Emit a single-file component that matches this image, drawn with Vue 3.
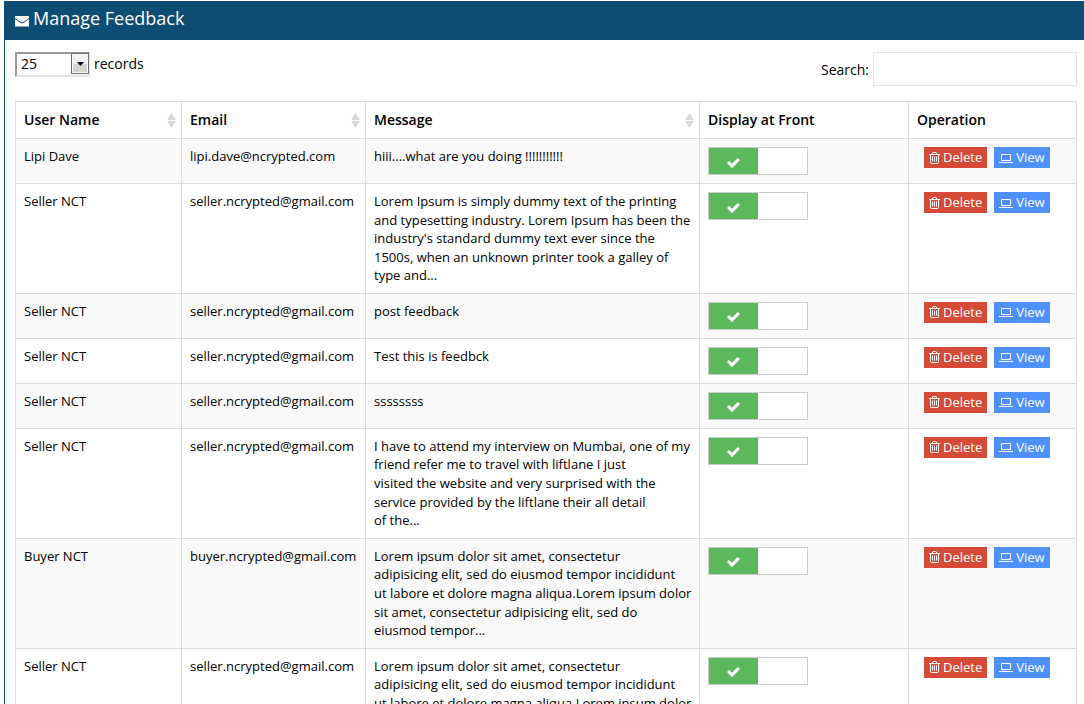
<script setup>
import { ref } from 'vue'

const pageSize = ref('25')
const search = ref('')

const columns = [
  { label: 'User Name', cls: 'col-name', sortable: true },
  { label: 'Email', cls: 'col-email', sortable: true },
  { label: 'Message', cls: 'col-message', sortable: true },
  { label: 'Display at Front', cls: 'col-display', sortable: false },
  { label: 'Operation', cls: 'col-operation', sortable: false },
]

const dolor =
  'Lorem ipsum dolor sit amet, consectetur\nadipisicing elit, sed do eiusmod tempor incididunt\nut labore et dolore magna aliqua.Lorem ipsum dolor\nsit amet, consectetur adipisicing elit, sed do\neiusmod tempor...'

const rows = ref([
  { name: 'Lipi Dave', email: 'lipi.dave@ncrypted.com', message: 'hiii....what are you doing !!!!!!!!!!!', shown: true },
  {
    name: 'Seller NCT',
    email: 'seller.ncrypted@gmail.com',
    message:
      "Lorem Ipsum is simply dummy text of the printing\nand typesetting industry. Lorem Ipsum has been the\nindustry's standard dummy text ever since the\n1500s, when an unknown printer took a galley of\ntype and...",
    shown: true,
  },
  { name: 'Seller NCT', email: 'seller.ncrypted@gmail.com', message: 'post feedback', shown: true },
  { name: 'Seller NCT', email: 'seller.ncrypted@gmail.com', message: 'Test this is feedbck', shown: true },
  { name: 'Seller NCT', email: 'seller.ncrypted@gmail.com', message: 'ssssssss', shown: true },
  {
    name: 'Seller NCT',
    email: 'seller.ncrypted@gmail.com',
    message:
      'I have to attend my interview on Mumbai, one of my\nfriend refer me to travel with liftlane I just\nvisited the website and very surprised with the\nservice provided by the liftlane their all detail\nof the...',
    shown: true,
  },
  { name: 'Buyer NCT', email: 'buyer.ncrypted@gmail.com', message: dolor, shown: true },
  { name: 'Seller NCT', email: 'seller.ncrypted@gmail.com', message: dolor, shown: true },
])
</script>

<template>
  <main class="panel">
    <header class="panel-head">
      <svg class="mail" width="14" height="11" viewBox="0 0 14 11" aria-hidden="true">
        <path class="mail-body" d="M0 0H14V10.500H0Z" />
        <path class="mail-fold" d="M0 2.500L5 6.200Q7 7.600 9 6.200L14 2.500" />
      </svg>
      <h1>Manage Feedback</h1>
    </header>

    <div class="panel-body">
      <div class="tools">
        <label class="length">
          <span class="select-box">
            <select v-model="pageSize">
              <option>10</option>
              <option>25</option>
              <option>50</option>
            </select>
            <span class="drop">
              <svg width="7" height="4" viewBox="0 0 7 4" aria-hidden="true"><path d="M0 0H7L3.500 4Z" /></svg>
            </span>
          </span>
          records
        </label>
        <label class="filter">
          Search:
          <input v-model="search" type="search" />
        </label>
      </div>

      <table>
        <thead>
          <tr>
            <th v-for="c in columns" :key="c.label" :class="c.cls" scope="col">
              <div class="head-cell">
                {{ c.label }}
                <svg v-if="c.sortable" class="sort" width="9" height="15" viewBox="0 0 9 15" aria-hidden="true">
                  <path d="M4.500 0L9 7H0ZM0 8H9L4.500 15Z" />
                </svg>
              </div>
            </th>
          </tr>
        </thead>
        <tbody>
          <tr v-for="(r, i) in rows" :key="i">
            <td>{{ r.name }}</td>
            <td>{{ r.email }}</td>
            <td class="message">{{ r.message }}</td>
            <td>
              <label class="toggle">
                <input v-model="r.shown" type="checkbox" :aria-label="'Display feedback from ' + r.name + ' at front'" />
                <span class="half">
                  <svg width="13" height="10" viewBox="0 0 13 10" aria-hidden="true">
                    <path d="M0 5L2 3L5 5.800L10.800 0L13 2L5.200 10H4.800Z" />
                  </svg>
                </span>
              </label>
            </td>
            <td>
              <div class="actions">
                <button type="button" class="delete">
                  <svg class="trash" width="11" height="12" viewBox="0 0 11 12" aria-hidden="true">
                    <path d="M0 2.500H11M3 2.500L4 .500H7L8 2.500M1.500 2.500V10.500Q1.500 11.500 2.500 11.500H8.500Q9.500 11.500 9.500 10.500V2.500M3.500 4.500V9.500M5.500 4.500V9.500M7.500 4.500V9.500" />
                  </svg>
                  Delete
                </button>
                <button type="button" class="view">
                  <svg width="14" height="10" viewBox="0 0 14 10" aria-hidden="true">
                    <path d="M2.500 1.500H11.500V7.500H2.500ZM0 9.500H14" />
                  </svg>
                  View
                </button>
              </div>
            </td>
          </tr>
        </tbody>
      </table>
    </div>
  </main>
</template>

<style>
html,
body {
  background: #fff;
}
body {
  margin: 0;
}
</style>

<style scoped>
* {
  box-sizing: border-box;
}
.panel {
  margin: 1px 0 0 4px;
  border-left: 1px solid #0e4d73;
  color: #000;
  font-family: "Open Sans", sans-serif;
  font-size: 13px;
  line-height: 1.43;
}
.panel-head {
  display: flex;
  align-items: center;
  gap: 4px;
  height: 39px;
  padding: 0 10px 6px 10px;
  background: #0e4d73;
  color: #fff;
}
.mail {
  margin-top: 8px;
}
.mail-body {
  fill: #fff;
}
.mail-fold {
  fill: none;
  stroke: #0e4d73;
}
h1 {
  margin: 0;
  font-size: 18px;
  font-weight: 400;
  line-height: 24px;
}
.panel-body {
  padding: 11px 7px 0 10px;
}
.tools {
  display: flex;
  justify-content: space-between;
  align-items: flex-start;
  margin-bottom: 15px;
  font-size: 14px;
}
.length,
.filter {
  display: flex;
  align-items: center;
  gap: 4px;
}
.length {
  line-height: 25px;
}
.filter {
  margin-top: 1px;
  line-height: 19px;
}
.select-box {
  position: relative;
  width: 75px;
  height: 25px;
}
select {
  width: 100%;
  height: 100%;
  padding: 0 20px 0 4px;
  border: 2px solid;
  border-color: #999 #e3e3e3 #e3e3e3 #999;
  border-radius: 0;
  appearance: none;
  background: #fff;
  color: #000;
  font: inherit;
  line-height: 20px;
}
.drop {
  position: absolute;
  top: 2px;
  right: 1px;
  bottom: 2px;
  display: flex;
  align-items: center;
  justify-content: center;
  width: 18px;
  border: 1px solid #707070;
  background: linear-gradient(#f2f2f2 50%, #d4d4d4 50%);
  box-shadow: inset 0 0 0 1px #f8f8f8;
  pointer-events: none;
}
.filter input {
  width: 204px;
  height: 34px;
  padding: 6px 12px;
  border: 1px solid #e5e5e5;
  border-radius: 0;
  outline: 0;
  appearance: none;
  background: #fff;
  font: inherit;
}
table {
  width: 100%;
  border-collapse: collapse;
  table-layout: fixed;
}
th,
td {
  padding: 8px;
  border: 1px solid #ddd;
  text-align: left;
  vertical-align: top;
}
th {
  font-size: 14px;
  font-weight: 600;
  line-height: 20px;
}
.col-name {
  width: 166px;
}
.col-email {
  width: 184px;
}
.col-display {
  width: 209px;
}
.col-operation {
  width: 168px;
}
.head-cell {
  display: flex;
  align-items: center;
  justify-content: space-between;
}
.sort {
  margin-right: -3px;
  fill: #d9d9d9;
}
tbody tr:nth-child(odd) {
  background: #f9f9f9;
}
.message {
  padding-right: 4px;
  white-space: pre-line;
}
.toggle {
  position: relative;
  display: block;
  width: 100px;
  height: 28px;
  border: 1px solid #ccc;
  background: #fff;
  cursor: pointer;
}
.toggle input {
  position: absolute;
  inset: 0;
  width: 100%;
  height: 100%;
  margin: 0;
  opacity: 0;
}
.half {
  display: flex;
  align-items: center;
  justify-content: center;
  width: 50%;
  height: 100%;
  padding-top: 3px;
  background: #5cb85c;
}
.half svg {
  fill: #fff;
}
.toggle input:not(:checked) + .half {
  visibility: hidden;
}
.actions {
  display: flex;
  gap: 7px;
  padding-left: 7px;
}
button {
  display: flex;
  align-items: center;
  gap: 3px;
  height: 21px;
  padding: 0 5px;
  border: 0;
  color: #fff;
  font: inherit;
  line-height: 21px;
  cursor: pointer;
}
button svg {
  fill: none;
  stroke: #fff;
}
.delete {
  background: #d84a38;
}
.view {
  background: #4d90fe;
}
</style>
